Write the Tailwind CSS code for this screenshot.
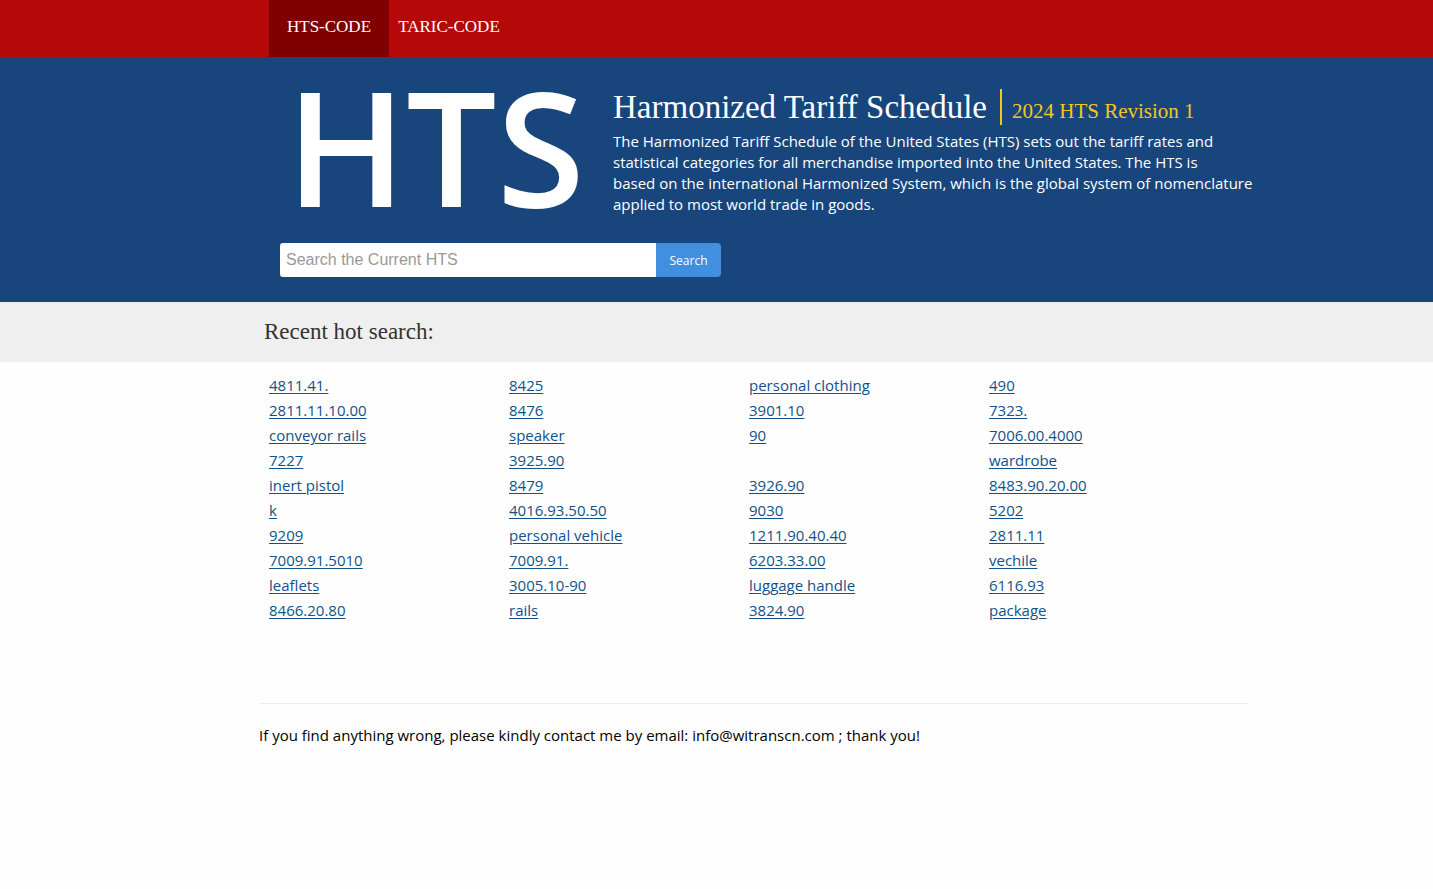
<!DOCTYPE html>
<html lang="en">
<head>
<meta charset="utf-8">
<meta name="viewport" content="width=device-width, initial-scale=1">
<title>Harmonized Tariff Schedule</title>
<script src="https://cdn.jsdelivr.net/npm/@tailwindcss/browser@4"></script>
</head>
<body class="min-h-screen bg-[#fefefe] font-['Open_Sans',sans-serif] text-[15px] text-black">
  <header>
    <nav class="flex bg-[#b50909] pl-[269px] font-['Georgia','Liberation_Serif',serif] text-[17px] font-medium text-white">
      <a href="#" class="flex h-[57px] w-[120px] justify-center bg-[#800000] pt-[14px]">HTS-CODE</a>
      <a href="#" class="flex h-[57px] w-[120px] justify-center pt-[14px]">TARIC-CODE</a>
    </nav>
    <div class="bg-[#19457d] pr-4 pb-[25px] pl-[280px] text-white">
      <div class="flex h-[186px]">
        <div class="w-[333px] shrink-0 pt-[7px] pl-[6px] text-[160px] leading-[162px] font-semibold">HTS</div>
        <div class="max-w-[660px] pt-8">
          <div class="flex items-center">
            <h1 class="font-['Liberation_Serif',serif] text-[33px] leading-9">Harmonized Tariff Schedule</h1>
            <p class="ml-[13px] h-9 border-l-2 border-[#f4c622] pl-[10px] font-['Liberation_Serif',serif] text-[21px] leading-[44px] text-[#f4c622]">2024 HTS Revision 1</p>
          </div>
          <p class="mt-[6px] leading-[21px]">The Harmonized Tariff Schedule of the United States (HTS) sets out the tariff rates and<br>statistical categories for all merchandise imported into the United States. The HTS is<br>based on the international Harmonized System, which is the global system of nomenclature<br>applied to most world trade in goods.</p>
        </div>
      </div>
      <form class="flex h-[34px] max-w-[441px]">
        <input type="text" aria-label="Search the Current HTS" placeholder="Search the Current HTS" class="min-w-0 flex-1 rounded-l-[3px] bg-white px-[6px] font-['Liberation_Sans',sans-serif] text-base text-black placeholder:text-[#999]">
        <button type="button" class="w-[65px] rounded-r bg-[#428fdf] pt-px text-xs">Search</button>
      </form>
    </div>
    <div class="bg-[#efefef] py-4 pl-[264px]">
      <h2 class="font-['Liberation_Serif',serif] text-[23px] leading-7 text-[#333]">Recent hot search:</h2>
    </div>
  </header>
  <main class="pl-[259px]">
    <ul class="grid max-w-[970px] grid-cols-4 pt-[11px] pl-[10px] leading-[25px] text-[#105289] underline underline-offset-2">
      <li><a href="#">4811.41.</a></li><li><a href="#">8425</a></li><li><a href="#">personal clothing</a></li><li><a href="#">490</a></li>
      <li><a href="#">2811.11.10.00</a></li><li><a href="#">8476</a></li><li><a href="#">3901.10</a></li><li><a href="#">7323.</a></li>
      <li><a href="#">conveyor rails</a></li><li><a href="#">speaker</a></li><li><a href="#">90</a></li><li><a href="#">7006.00.4000</a></li>
      <li><a href="#">7227</a></li><li><a href="#">3925.90</a></li><li></li><li><a href="#">wardrobe</a></li>
      <li><a href="#">inert pistol</a></li><li><a href="#">8479</a></li><li><a href="#">3926.90</a></li><li><a href="#">8483.90.20.00</a></li>
      <li><a href="#">k</a></li><li><a href="#">4016.93.50.50</a></li><li><a href="#">9030</a></li><li><a href="#">5202</a></li>
      <li><a href="#">9209</a></li><li><a href="#">personal vehicle</a></li><li><a href="#">1211.90.40.40</a></li><li><a href="#">2811.11</a></li>
      <li><a href="#">7009.91.5010</a></li><li><a href="#">7009.91.</a></li><li><a href="#">6203.33.00</a></li><li><a href="#">vechile</a></li>
      <li><a href="#">leaflets</a></li><li><a href="#">3005.10-90</a></li><li><a href="#">luggage handle</a></li><li><a href="#">6116.93</a></li>
      <li><a href="#">8466.20.80</a></li><li><a href="#">rails</a></li><li><a href="#">3824.90</a></li><li><a href="#">package</a></li>
    </ul>
    <footer class="mt-20 max-w-[990px] border-t border-[#eee] pt-[19px]">
      <p class="leading-6">If you find anything wrong, please kindly contact me by email: info@witranscn.com ; thank you!</p>
    </footer>
  </main>
</body>
</html>
